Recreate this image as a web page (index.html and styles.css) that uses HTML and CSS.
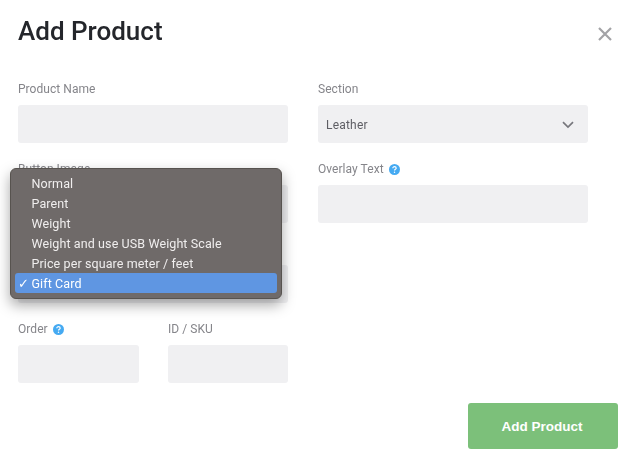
FILE: index.html
```html
<!DOCTYPE html>
<html lang="en">
<head>
<meta charset="utf-8">
<title>Add Product</title>
<link rel="stylesheet" href="styles.css">
</head>
<body>
<main class="modal">
  <header class="head">
    <h1 class="title">Add Product</h1>
    <button class="close" aria-label="Close">
      <svg width="14" height="14" viewBox="0 0 14 14"><path d="M1 1L13 13M13 1L1 13" fill="none" stroke="#a3a3a6" stroke-width="2.2"/></svg>
    </button>
  </header>
  <form class="form">
    <div class="col">
      <div class="field"><label class="label">Product Name</label><div class="input"></div></div>
      <div class="field"><label class="label">Button Image</label><div class="input"></div></div>
      <div class="field"><span class="label"></span><div class="input"></div></div>
      <div class="pair">
        <div class="field"><label class="label">Order
          <svg class="help" width="11" height="11" viewBox="0 0 11 11"><circle cx="5.5" cy="5.5" r="5.5" fill="#45aaf2"/><path d="M3.8 4.3C3.8 3.3 4.6 2.7 5.5 2.7S7.2 3.3 7.2 4.2C7.2 5.3 5.5 5.3 5.5 6.5" fill="none" stroke="#fff" stroke-width="1.2"/><circle cx="5.5" cy="8.2" r=".75" fill="#fff"/></svg></label><div class="input"></div></div>
        <div class="field"><label class="label">ID / SKU</label><div class="input"></div></div>
      </div>
    </div>
    <div class="col">
      <div class="field"><label class="label">Section</label>
        <div class="input select"><span>Leather</span>
          <svg width="12" height="8" viewBox="0 0 12 8"><path d="M1 1.2L6 6L11 1.2" fill="none" stroke="#77777d" stroke-width="1.7"/></svg>
        </div></div>
      <div class="field"><label class="label">Overlay Text
        <svg class="help" width="11" height="11" viewBox="0 0 11 11"><circle cx="5.5" cy="5.5" r="5.5" fill="#45aaf2"/><path d="M3.8 4.3C3.8 3.3 4.6 2.7 5.5 2.7S7.2 3.3 7.2 4.2C7.2 5.3 5.5 5.3 5.5 6.5" fill="none" stroke="#fff" stroke-width="1.2"/><circle cx="5.5" cy="8.2" r=".75" fill="#fff"/></svg></label><div class="input"></div></div>
    </div>
  </form>
  <footer class="foot"><button class="submit" type="button">Add Product</button></footer>
  <ul class="menu">
    <li class="item">Normal</li>
    <li class="item">Parent</li>
    <li class="item">Weight</li>
    <li class="item">Weight and use USB Weight Scale</li>
    <li class="item">Price per square meter / feet</li>
    <li class="item active"><span class="check">✓</span>Gift Card</li>
  </ul>
</main>
</body>
</html>
```
FILE: styles.css
```css
* { box-sizing: border-box; }
html, body { margin: 0; height: 100%; background: #fff; overflow: hidden; }
body { font-family: Roboto, "Liberation Sans", sans-serif; }
.modal { position: relative; width: 640px; height: 465px; padding: 14px 22px 0 18px; filter: blur(.35px); }
.head { display: flex; justify-content: space-between; align-items: flex-start; height: 67px; }
.title { margin: 0; font-size: 26px; line-height: 34px; font-weight: 500; color: #24262b; }
.close { margin: 13px 6px 0 0; padding: 0; border: 0; background: none; display: block; line-height: 0; }
.form { display: grid; grid-template-columns: 270px 270px; column-gap: 30px; }
.col { display: flex; flex-direction: column; gap: 18px; }
.field { display: flex; flex-direction: column; gap: 8px; min-width: 0; }
.label { display: flex; align-items: center; gap: 5px; height: 16px; font-size: 12px; line-height: 16px; color: #85858a; letter-spacing: .05px; }
.input { height: 38px; border-radius: 3px; background: #f0f0f2; }
.select { display: flex; align-items: center; justify-content: space-between; padding: 1px 14px 0 8px; font-size: 12px; color: #5e5e64; letter-spacing: .2px; }
.pair { display: grid; grid-template-columns: 121px 120px; column-gap: 29px; }
.foot { position: absolute; right: 22px; top: 403px; }
.submit { display: block; width: 150px; height: 46px; padding: 1px 2px 0 0; border: 0; border-radius: 3px; background: #7cc07a; color: #fff; font: 700 13.5px/46px Arial, "Liberation Sans", sans-serif; }
.menu { position: absolute; left: 10px; top: 168px; width: 272px; height: 131px; margin: 0; padding: 4px; list-style: none; background: #6f6a69; border: 1px solid #57534f; border-radius: 6px; box-shadow: 0 6px 14px rgba(0,0,0,.35); }
.item { position: relative; height: 20px; padding-left: 16.5px; font-size: 12.5px; line-height: 21px; color: #f0eeee; letter-spacing: .1px; white-space: nowrap; }
.active { background: #5f96e2; border-radius: 3px; color: #fff; }
.check { position: absolute; left: 3px; top: 0; font-size: 13px; }
```
